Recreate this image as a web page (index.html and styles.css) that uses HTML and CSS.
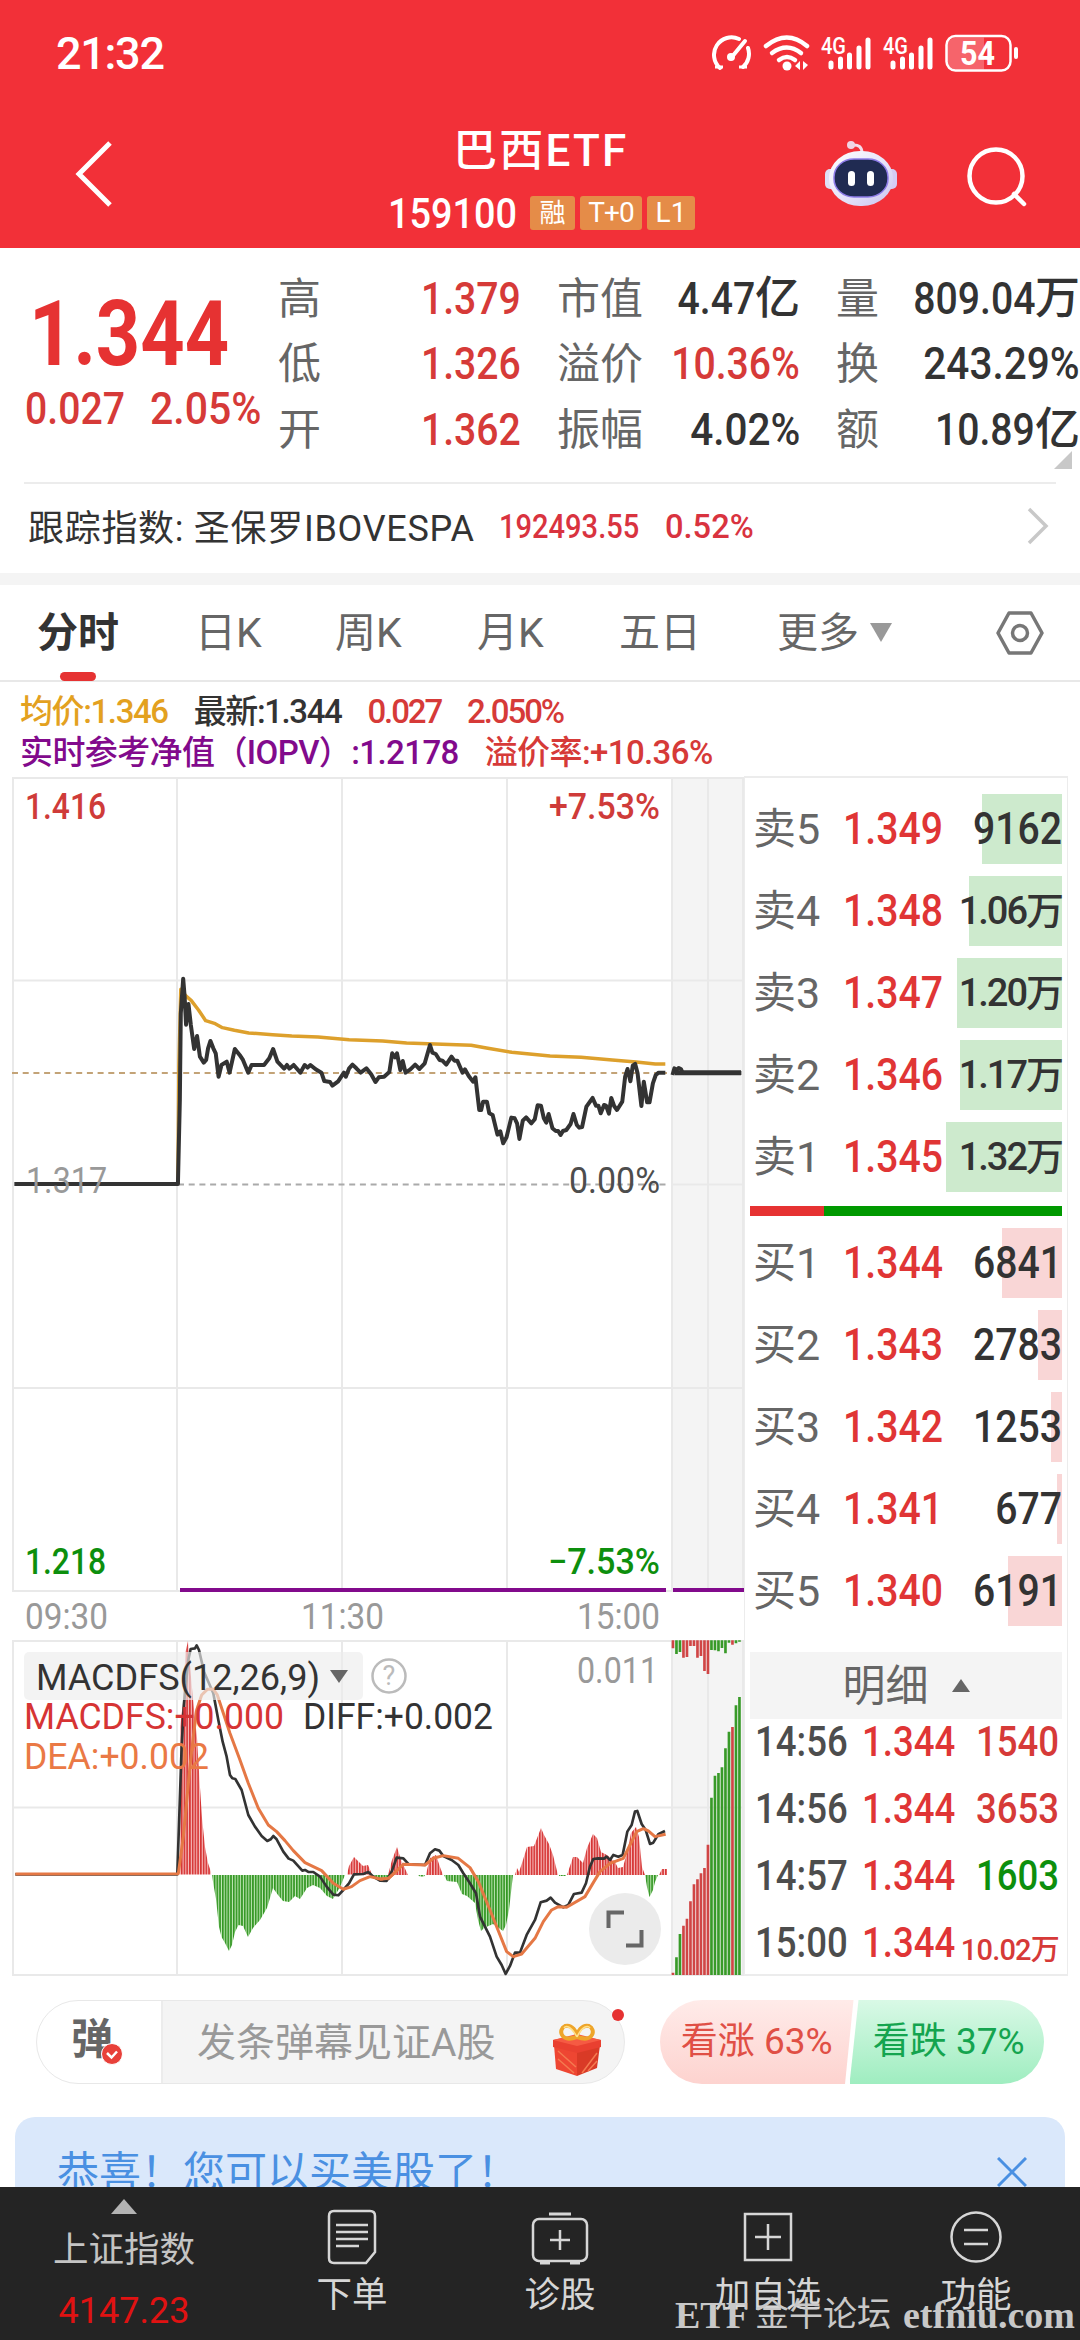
FILE: index.html
```html
<!DOCTYPE html>
<html lang="zh-CN">
<head>
    <meta charset="UTF-8">
    <meta name="viewport" content="width=device-width, initial-scale=1.0">
    <title>巴西ETF 159100</title>
    <link rel="stylesheet" href="styles.css">
</head>
<body>

<div class="header">
    <div class="status-bar">
        <div class="time">21:32</div>
        <svg class="status-icons" width="310" height="42" viewBox="0 0 310 42" fill="none" stroke="#fff">
            <!-- speed -->
            <path d="M8 34 A17.500 17.500 0 0 1 27 5 M36 14 A17.500 17.500 0 0 1 31 33" stroke-width="4" stroke-linecap="round"/>
            <path d="M3 33 h8 M27 33 h8" stroke-width="3"/>
            <path d="M19 24 L33 7" stroke-width="4" stroke-linecap="round"/>
            <circle cx="19" cy="23" r="4" fill="#fff" stroke="none"/>
            <!-- wifi -->
            <g stroke-width="4.500" stroke-linecap="round">
                <path d="M54 12 Q75 -5 95 12"/>
                <path d="M60 19 Q75 8 89 19"/>
                <path d="M67 26 Q75 20 83 26"/>
            </g>
            <circle cx="75" cy="32" r="4.500" fill="#fff" stroke="none"/>
            <path d="M88 27 v9 l-5 -4 z M91 27 v9 l5 -5 z" fill="#fff" stroke="none"/>
            <!-- signal -->
            <g stroke-width="5" stroke-linecap="round">
                <path d="M119 29 V33 M128.500 25 V33 M137.500 21 V33 M147 14 V33 M156 6 V33"/>
                <path d="M181 29 V33 M190.500 25 V33 M199.500 21 V33 M209 14 V33 M218 6 V33"/>
            </g>
            <text x="109" y="19.500" class="net" textLength="25" lengthAdjust="spacingAndGlyphs">4G</text>
            <text x="171" y="19.500" class="net" textLength="25" lengthAdjust="spacingAndGlyphs">4G</text>
            <!-- battery -->
            <path d="M244 3 h28 v32 h-28 a9 9 0 0 1 -9 -9 v-14 a9 9 0 0 1 9 -9z" fill="#f6646b" stroke="none" transform="translate(0 .5)"/>
            <rect x="234.500" y="2" width="64" height="34.500" rx="9" stroke-width="2.500"/>
            <path d="M304 15 v8" stroke-width="4" stroke-linecap="round"/>
            <text x="248" y="31" class="battery" textLength="35" lengthAdjust="spacingAndGlyphs">54</text>
        </svg>
    </div>
    <div class="nav">
        <svg class="back" width="40" height="68" viewBox="0 0 40 68" fill="none" stroke="#fff" stroke-width="5">
            <path d="M36 3 L5 34 L36 65"/>
        </svg>
        <div class="title">
            <div class="name">巴西ETF</div>
            <div class="code-row">
                <span class="code">159100</span>
                <span class="badge b1">融</span>
                <span class="badge b2">T+0</span>
                <span class="badge b3">L1</span>
            </div>
        </div>
        <svg class="robot" width="72" height="68" viewBox="0 0 72 68">
            <defs>
                <linearGradient id="shell" x1="0" y1="0" x2="1" y2="1">
                    <stop offset="0" stop-color="#fff"/>
                    <stop offset=".6" stop-color="#e3e0f8"/>
                    <stop offset="1" stop-color="#c9c3ef"/>
                </linearGradient>
            </defs>
            <path d="M27 5 Q37 4 37 13" fill="none" stroke="#f4dcea" stroke-width="3"/>
            <circle cx="26" cy="5" r="4" fill="#f0d4e4"/>
            <rect x="0" y="29" width="12" height="20" rx="5" fill="#dfe0f6"/>
            <rect x="60" y="29" width="12" height="20" rx="5" fill="#d5ccf4"/>
            <rect x="4" y="11" width="64" height="55" rx="31" ry="27" fill="url(#shell)"/>
            <rect x="9" y="19" width="54" height="38" rx="20" ry="18" fill="#202b52" stroke="#8d7be8" stroke-width="1.500"/>
            <rect x="23" y="31" width="7" height="15" rx="3.500" fill="#fff"/>
            <rect x="42" y="31" width="7" height="15" rx="3.500" fill="#fff"/>
        </svg>
        <svg class="search" width="62" height="62" viewBox="0 0 62 62" fill="none" stroke="#fff" stroke-width="4.500">
            <circle cx="30" cy="30" r="26.500"/>
            <path d="M48 48 L58 58" stroke-linecap="round"/>
        </svg>
    </div>
</div>

<div class="quote">
    <div class="quote-main">
        <div class="price">1.344</div>
        <div class="change"><span class="num">0.027</span><span class="num">2.05%</span></div>
    </div>
    <div class="stats">
        <div class="stat"><label>高</label><span class="num end red">1.379</span></div>
        <div class="stat"><label>市值</label><span class="num end">4.47</span>亿</div>
        <div class="stat"><label>量</label><span class="num end">809.04</span>万</div>
        <div class="stat"><label>低</label><span class="num end red">1.326</span></div>
        <div class="stat"><label>溢价</label><span class="num end red">10.36%</span></div>
        <div class="stat"><label>换</label><span class="num end wide">243.29%</span></div>
        <div class="stat"><label>开</label><span class="num end red">1.362</span></div>
        <div class="stat"><label>振幅</label><span class="num end wide">4.02%</span></div>
        <div class="stat"><label>额</label><span class="num end">10.89</span>亿</div>
    </div>
    <div class="corner"></div>
</div>

<div class="track">
    <div class="track-name">跟踪指数: 圣保罗IBOVESPA</div>
    <span class="num t1">192493.55</span>
    <span class="num t2">0.52%</span>
    <svg width="24" height="40" viewBox="0 0 24 40" fill="none" stroke="#c8c8c8" stroke-width="3.500">
        <path d="M3 3 L20 20 L3 37"/>
    </svg>
</div>

<div class="tabs">
    <div class="tab active">分时</div>
    <div class="tab">日K</div>
    <div class="tab">周K</div>
    <div class="tab">月K</div>
    <div class="tab">五日</div>
    <div class="tab more">更多</div>
    <svg class="tab-arrow" width="24" height="20" viewBox="0 0 24 20"><path d="M1 0 H23 L12 19z" fill="#999"/></svg>
    <svg class="setting" width="50" height="46" viewBox="0 0 50 46" fill="none" stroke="#777" stroke-width="3.500" stroke-linejoin="round">
        <path d="M14 3 H36 L47 23 L36 43 H14 L3 23z"/>
        <circle cx="25" cy="23" r="7.500"/>
    </svg>
</div>

<div class="info">
    <div class="info-row tight">
        <span class="avg">均价:1.346</span>
        <span class="last">最新:1.344</span>
        <span class="red diff">0.027</span>
        <span class="red diff">2.050%</span>
    </div>
    <div class="info-row">
        <span class="iopv">实时参考净值（IOPV）:1.2178</span>
        <span class="red">溢价率:+10.36%</span>
    </div>
</div>

<div class="main">
    <div class="charts">
        <svg width="744" height="1204" viewBox="0 772 744 1204">
            <defs>
                <pattern id="bar-red" width="2.740" height="10" patternUnits="userSpaceOnUse">
                    <rect width="2.740" height="10" fill="#f9c6c6"/>
                    <rect width="1.700" height="10" fill="#d63434"/>
                </pattern>
                <pattern id="bar-green" width="2.740" height="10" patternUnits="userSpaceOnUse">
                    <rect width="2.740" height="10" fill="#c2e8b8"/>
                    <rect width="1.700" height="10" fill="#329622"/>
                </pattern>
            </defs>

            <!-- after hours area -->
            <rect x="672" y="778" width="72" height="812" fill="#f4f4f4"/>
            <rect x="672" y="1641" width="72" height="333" fill="#f4f4f4"/>

            <!-- grid -->
            <g stroke="#e9e9e9" stroke-width="2" fill="none">
                <path d="M12 778 H744 M12 980.500 H744 M12 1388 H744 M12 1591 H744 M672 1184.500 H744"/>
                <path d="M13 777 V1591 M177 777 V1591 M342 777 V1591 M507 777 V1591 M672 777 V1591 M708 777 V1591 M743 777 V1591"/>
                <path d="M12 1641 H744 M12 1807.500 H744 M12 1975 H744"/>
                <path d="M13 1641 V1975 M177 1641 V1975 M342 1641 V1975 M507 1641 V1975 M672 1641 V1975 M708 1641 V1975 M743 1641 V1975"/>
            </g>
            <path d="M12 1073 H667" stroke="#c3a377" stroke-width="2" stroke-dasharray="6 4.700"/>
            <path d="M178 1184.500 H667" stroke="#aaa" stroke-width="2" stroke-dasharray="6 4.700"/>

            <!-- price lines -->
            <g transform="translate(0 900) scale(.4783 .3333)" fill="none" stroke-linejoin="round">
                <polyline vector-effect="non-scaling-stroke" stroke="#dda02c" stroke-width="3.500" points="372,852 374,500 378,268 388,287 400,302 415,330 430,362 450,371 465,383 490,391 520,399 570,404 610,408 665,411 730,419 800,423 850,429 910,432 985,436 1020,445 1070,457 1150,468 1215,472 1280,480 1330,486 1370,492 1391,492"/>
                <polyline vector-effect="non-scaling-stroke" stroke="#333" stroke-width="4" points="30,852 372,852 376,600 378,340 383,236 386,290 389,374 394,312 399,375 406,447 412,408 418,470 426,488 431,480 435,445 440,423 446,445 451,460 457,530 463,495 474,485 480,518 491,447 501,465 508,480 519,518 526,495 552,495 563,475 571,447 580,485 594,506 600,495 605,506 614,495 628,518 637,495 643,503 649,495 660,508 672,518 678,543 690,546 695,557 707,544 719,518 723,530 730,505 737,494 745,505 754,518 766,505 776,523 785,546 792,532 803,530 814,516 820,460 826,472 830,460 837,510 842,483 848,518 858,508 868,494 877,507 888,490 899,435 904,458 911,462 919,480 925,482 933,494 944,470 950,482 956,482 967,518 972,508 980,528 989,545 994,532 1002,630 1006,630 1010,605 1018,605 1023,640 1030,645 1040,704 1046,694 1052,730 1059,712 1069,653 1076,655 1081,670 1086,717 1093,662 1100,652 1111,670 1118,658 1124,616 1131,617 1137,655 1142,668 1147,642 1155,685 1162,693 1167,693 1172,705 1177,693 1184,690 1193,672 1199,642 1206,675 1211,683 1217,681 1226,620 1239,594 1246,617 1251,617 1256,640 1263,615 1267,617 1273,641 1278,594 1284,618 1290,630 1301,605 1307,530 1312,507 1318,544 1323,497 1328,492 1333,520 1341,618 1346,545 1353,607 1358,607 1365,550 1371,525 1377,518 1391,518"/>
                <polyline vector-effect="non-scaling-stroke" stroke="#333" stroke-width="4" points="1406,525 1410,505 1415,510 1419,504 1424,508 1427,519 1550,519"/>
            </g>
            <path d="M675 1072.800 H741" stroke="#333" stroke-width="5"/>
            <path d="M180 1590 H666 M673 1590 H744" stroke="#820a8c" stroke-width="4"/>

            <text x="25" y="819" class="axis b" fill="#cf3b39" textLength="81" lengthAdjust="spacingAndGlyphs">1.416</text>
            <text x="549" y="819" class="axis b" fill="#cf3b39" textLength="111" lengthAdjust="spacingAndGlyphs">+7.53%</text>
            <text x="26" y="1193" class="axis" fill="#999" textLength="81" lengthAdjust="spacingAndGlyphs">1.317</text>
            <text x="569" y="1193" class="axis" fill="#4d4d4d" textLength="91" lengthAdjust="spacingAndGlyphs">0.00%</text>
            <text x="25" y="1574" class="axis b" fill="#0d8f0d" textLength="81" lengthAdjust="spacingAndGlyphs">1.218</text>
            <text x="548" y="1574" class="axis b" fill="#0d8f0d" textLength="112" lengthAdjust="spacingAndGlyphs">−7.53%</text>
            <text x="25" y="1629" class="axis" fill="#999" textLength="83" lengthAdjust="spacingAndGlyphs">09:30</text>
            <text x="301" y="1629" class="axis" fill="#999" textLength="83" lengthAdjust="spacingAndGlyphs">11:30</text>
            <text x="577" y="1629" class="axis" fill="#999" textLength="83" lengthAdjust="spacingAndGlyphs">15:00</text>
            <text x="577" y="1683" class="axis" fill="#999" textLength="81" lengthAdjust="spacingAndGlyphs">0.011</text>

            <!-- macd, first half -->
            <path fill="url(#bar-red)" transform="translate(0 1560)" d="M180 314.500 V167 L183 143 L185.500 92 L188 81 L191 117 L194 149 L197 178 L199.500 220 L202 258 L205 287 L208 303 L211 312 V314.500z M347 314.500 L349 306 L354 297 L359 302 L363 306 L368 305 L372 314.500z"/>
            <path fill="url(#bar-green)" transform="translate(0 1560)" d="M212 315 L213.500 325 L216 339 L219 367 L221.500 377 L225 383 L229 391 L232 385 L235 372 L238.500 365 L243 366 L248 377 L253 368 L260 360 L267 348 L273 328 L278 335 L283 341 L289 342 L295 336 L300 339 L307 328 L313 325 L320 328 L327 336 L333 339 L340 327 L345 315z M373 315 L380 320 L388 319 L390 315z"/>
            <g transform="translate(0 1560) scale(.3333)" fill="none" stroke-linejoin="round">
                <polyline stroke="#333" stroke-width="8" points="46,943 532,943 545,560 552,430 565,300 572,267 585,265 590,256 597,270 612,335 640,400 655,480 668,545 680,590 690,645 697,655 706,657 725,690 745,765 765,800 785,828 802,843 812,838 820,828 830,838 850,875 866,896 880,902 907,932 915,930 925,936 940,936 960,950 980,980 1000,1004 1015,1006 1030,990 1047,970 1062,943 1090,942 1105,936 1120,950 1140,962 1160,963 1173,940 1190,893"/>
                <polyline stroke="#e57845" stroke-width="9" points="46,942 535,941 550,830 570,620 580,530 590,450 605,405 622,388 640,388 652,405 690,520 720,600 745,670 775,745 805,795 830,815 855,842 880,872 915,908 965,932 1000,970 1030,988 1055,980 1080,962 1110,950 1140,957 1165,956 1185,937"/>
            </g>
            <!-- macd, second half -->
            <path fill="url(#bar-red)" transform="translate(380 1600)" d="M8 275 L12 260 L17 247 L21 260 L28 275z M46 275 L47 270 L50 258 L56 255 L60 267 L63 275z M135 275 L137 268 L139 272 L142 263 L147 247 L154 246 L161 228 L164 235 L169 244 L173 255 L178 275z M187 275 L193 257 L197 257 L203 263 L207 248 L213 234 L217 238 L221 252 L227 255 L235 262 L238 268 L243 267 L247 253 L251 233 L256 227 L259 237 L262 267 L265 275z M279 275 L282 269 L287 269 V275z"/>
            <path fill="url(#bar-green)" transform="translate(380 1600)" d="M64 275 L67 281 L77 282 L82 294 L87 296 L95 303 L98 320 L101 331 L104 328 L113 324 L123 331 L126 325 L129 310 L133 275z M30 275 h8 l2 1.500 h4 l1 -1.500z M265 275 L267 287 L269.500 297 L273 290 L275 282 L278 275z M179 275 h7 v1 h-7z"/>
            <g transform="translate(380 1600) scale(.3333)" fill="none" stroke-linejoin="round">
                <polyline stroke="#333" stroke-width="8" points="10,843 25,836 35,815 50,773 70,775 85,792 135,795 150,760 165,748 178,752 190,768 215,780 235,795 250,820 270,850 288,880 300,950 330,1010 350,1070 365,1095 377,1122 390,1098 405,1058 420,1058 440,1005 465,960 482,907 500,902 512,893 525,908 550,922 565,915 582,882 605,878 618,850 630,800 640,777 655,775 672,776 680,770 690,780 700,765 715,770 728,765 742,695 755,675 765,635 772,633 785,672 797,690 810,732 820,728 835,703 855,693"/>
                <polyline stroke="#e57845" stroke-width="9" points="0,838 25,835 45,817 70,793 135,795 160,775 190,767 235,775 270,803 295,845 330,930 360,1005 380,1055 400,1070 425,1062 465,1015 490,965 515,930 535,920 560,922 615,890 640,848 660,815 690,790 730,775 750,735 770,695 790,686 805,693 825,710 857,703"/>
                <!-- after hours volume -->
                <g stroke-width="8">
                    <path stroke="#d04545" d="M879 1125 V1118 M910.500 1125 V977 M921 1125 V956 M931.500 1125 V904 M942 1125 V853 M952.500 1125 V838 M963 1125 V820 M973.500 1125 V804 M984 1125 V734 M1057.500 1125 V381 M879 121 V145 M910.500 121 V173 M921 121 V171 M931.500 121 V138 M942 121 V138 M952.500 121 V173 M963 121 V168 M973.500 121 V213 M984 121 V222 M1057.500 121 V134"/>
                    <path stroke="#389a28" d="M889.500 1125 V1072 M900 1125 V1002 M994.500 1125 V593 M1005 1125 V527 M1015.500 1125 V519 M1026 1125 V502 M1036.500 1125 V445 M1047 1125 V395 M1068 1125 V316 M1078.500 1125 V291 M889.500 121 V162 M900 121 V156 M994.500 121 V150 M1005 121 V151 M1015.500 121 V154 M1026 121 V144 M1036.500 121 V160 M1047 121 V128 M1068 121 V130 M1078.500 121 V125"/>
                </g>
            </g>

            <text x="24" y="1729" class="axis" fill="#d63434" textLength="260" lengthAdjust="spacingAndGlyphs">MACDFS:+0.000</text>
            <text x="303" y="1729" class="axis" fill="#333" textLength="190" lengthAdjust="spacingAndGlyphs">DIFF:+0.002</text>
            <text x="24" y="1769" class="axis" fill="#ea7945" textLength="185" lengthAdjust="spacingAndGlyphs">DEA:+0.002</text>

            <!-- indicator picker -->
            <rect x="24" y="1652" width="339" height="48" rx="5" fill="#ececec" opacity=".65"/>
            <text x="36" y="1690" class="axis" fill="#333" textLength="284" lengthAdjust="spacingAndGlyphs">MACDFS(12,26,9)</text>
            <path d="M330 1670 H348 L339 1683z" fill="#666"/>
            <circle cx="389" cy="1676" r="16.500" fill="none" stroke="#bbb" stroke-width="2.500"/>
            <text x="389" y="1685" text-anchor="middle" class="help">?</text>

            <!-- full screen -->
            <circle cx="625" cy="1929" r="36" fill="#ebebeb"/>
            <path d="M608.500 1928 V1912.500 H624 M626 1945.500 H641.500 V1930" fill="none" stroke="#666" stroke-width="4"/>
        </svg>
    </div>

    <div class="book">
        <div class="level sell"><i style="width: 80px"></i><b>卖5</b><span class="num p">1.349</span><span class="num end v">9162</span></div>
        <div class="level sell"><i style="width: 93px"></i><b>卖4</b><span class="num p">1.348</span><span class="v small">1.06万</span></div>
        <div class="level sell"><i style="width: 105px"></i><b>卖3</b><span class="num p">1.347</span><span class="v small">1.20万</span></div>
        <div class="level sell"><i style="width: 102px"></i><b>卖2</b><span class="num p">1.346</span><span class="v small">1.17万</span></div>
        <div class="level sell"><i style="width: 116px"></i><b>卖1</b><span class="num p">1.345</span><span class="v small">1.32万</span></div>
        <div class="ratio"><div></div></div>
        <div class="level buy"><i style="width: 60px"></i><b>买1</b><span class="num p">1.344</span><span class="num end v">6841</span></div>
        <div class="level buy"><i style="width: 24px"></i><b>买2</b><span class="num p">1.343</span><span class="num end v">2783</span></div>
        <div class="level buy"><i style="width: 11px"></i><b>买3</b><span class="num p">1.342</span><span class="num end v">1253</span></div>
        <div class="level buy"><i style="width: 5px"></i><b>买4</b><span class="num p">1.341</span><span class="num end v">677</span></div>
        <div class="level buy"><i style="width: 54px"></i><b>买5</b><span class="num p">1.340</span><span class="num end v">6191</span></div>
        <div class="detail-title">明细<svg width="18" height="13" viewBox="0 0 18 13"><path d="M0 13 L9 0 L18 13z" fill="#666"/></svg></div>
        <div class="tick"><span class="num t">14:56</span><span class="num p">1.344</span><span class="num end v red">1540</span></div>
        <div class="tick"><span class="num t">14:56</span><span class="num p">1.344</span><span class="num end v red">3653</span></div>
        <div class="tick"><span class="num t">14:57</span><span class="num p">1.344</span><span class="num end v green">1603</span></div>
        <div class="tick"><span class="num t">15:00</span><span class="num p">1.344</span><span class="v small red">10.02万</span></div>
    </div>
</div>

<div class="danmu">
    <div class="danmu-box">
        <div class="danmu-switch">弹
            <svg width="22" height="22" viewBox="0 0 22 22"><circle cx="11" cy="11" r="10.500" fill="#e8403a" stroke="#fff"/><path d="M6 10 L10.500 14.500 L16 8.500" fill="none" stroke="#fff" stroke-width="2.500"/></svg>
        </div>
        <div class="danmu-input">发条弹幕见证A股</div>
        <svg class="gift" width="50" height="54" viewBox="0 0 50 54">
            <path d="M2 22 L25 28 V53 L4 46z" fill="#ee4632"/>
            <path d="M48 22 L25 28 V53 L45 45z" fill="#d93a26"/>
            <path d="M1 17 L25 12 L49 17 V24 L25 30 L1 24z" fill="#e94030"/>
            <path d="M1 17 L25 11 L49 17 L25 23z" fill="#f55a43"/>
            <path d="M6 36 L22 50 M6 28 L24 44 M45 30 L30 50 M45 38 L36 48" stroke="#f47a50" stroke-width="1.500"/>
            <path d="M25 14 C8 20 6 6 13 3 C20 1 25 9 25 14 C25 9 30 1 37 3 C44 6 42 20 25 14z" fill="none" stroke="#eea52a" stroke-width="4"/>
            <path d="M25 14 C19 3 14 2 12 5 M25 14 C30 3 36 2 38 5" fill="none" stroke="#ffe08a" stroke-width="1.500"/>
        </svg>
        <div class="dot"></div>
    </div>
    <div class="vote">
        <div class="vote-up">看涨 63%</div>
        <div class="vote-down">看跌 37%</div>
    </div>
</div>

<div class="banner">
    <div>恭喜！您可以买美股了！</div>
    <svg width="30" height="30" viewBox="0 0 30 30" stroke="#4a90e2" stroke-width="3"><path d="M1 1 L29 29 M29 1 L1 29"/></svg>
</div>

<div class="footer">
    <div class="index">
        <svg width="26" height="15" viewBox="0 0 26 15"><path d="M0 15 L13 0 L26 15z" fill="#b3b3b3"/></svg>
        <div class="index-name">上证指数</div>
        <div class="index-value">4147.23</div>
    </div>
    <div class="menu">
        <svg width="60" height="56" viewBox="0 0 60 56" fill="none" stroke="#d6d6d6" stroke-width="2.500">
            <path d="M12 2 H48 Q53 2 53 7 V43 L44 54 H12 Q7 54 7 49 V7 Q7 2 12 2z"/>
            <path d="M14 16 H46 M14 23 H46 M14 30 H46 M14 37 H37"/>
        </svg>
        下单
    </div>
    <div class="menu">
        <svg width="60" height="56" viewBox="0 0 60 56" fill="none" stroke="#d6d6d6" stroke-width="2.500">
            <path d="M19 5 H41" stroke-width="3"/>
            <rect x="3" y="10" width="54" height="42" rx="6"/>
            <path d="M20 31 H40 M30 21 V41"/>
            <path d="M10 54 H20 M40 54 H50" stroke-width="3"/>
        </svg>
        诊股
    </div>
    <div class="menu">
        <svg width="60" height="56" viewBox="0 0 60 56" fill="none" stroke="#d6d6d6" stroke-width="2.500">
            <rect x="7" y="5" width="46" height="46"/>
            <path d="M17 28 H43 M30 15 V41"/>
        </svg>
        加自选
    </div>
    <div class="menu">
        <svg width="60" height="56" viewBox="0 0 60 56" fill="none" stroke="#d6d6d6" stroke-width="2.500">
            <circle cx="30" cy="28" r="24.500"/>
            <path d="M18 21 H42 M18 35 H42"/>
        </svg>
        功能
    </div>
    <div class="site"><span class="site-etf">ETF</span><span class="site-cn">金牛论坛</span><span class="site-url">etfniu.com</span></div>
</div>

</body>
</html>
```
FILE: styles.css
```css
* {
    box-sizing: border-box;
}
body {
    margin: 0;
    width: 1080px;
    height: 2340px;
    overflow: hidden;
    background-color: #fff;
    color: #333;
    font-family: Roboto, "Noto Sans CJK SC", sans-serif;
}
svg {
    display: block;
    flex: none;
}
.red {
    color: #d63a38;
}
.green {
    color: #0d8f0d;
}
.num {
    display: inline-block;
    font-weight: 500;
    white-space: nowrap;
    transform: scaleX(0.87);
    transform-origin: left center;
}
.num.end {
    transform-origin: right center;
}
.num.wide {
    transform: scaleX(0.9);
}

/* header */
.header {
    height: 248px;
    background-color: #f23038;
    color: #fff;
}
.status-bar {
    display: flex;
    justify-content: space-between;
    height: 108px;
    padding: 34px 58px 0 56px;
}
.time {
    font-size: 45px;
    line-height: 40px;
    font-weight: 500;
    letter-spacing: -1.3px;
}
.net {
    font-size: 23px;
    font-weight: 500;
    fill: #fff;
    stroke: none;
}
.battery {
    font-size: 33px;
    font-weight: 700;
    fill: #fff;
    stroke: none;
}
.nav {
    display: flex;
    height: 140px;
}
.back {
    margin: 32px 0 0 74px;
}
.title {
    width: 320px;
    margin-left: 268px;
    padding-top: 15px;
}
.name {
    padding-left: 71px;
    font-size: 44px;
    line-height: 56px;
    font-weight: 500;
    white-space: nowrap;
    letter-spacing: 2.2px;
}
.code-row {
    display: flex;
    align-items: center;
    height: 40px;
    margin-top: 14px;
    padding-left: 6px;
}
.code {
    width: 142px;
    font-size: 43px;
    line-height: 40px;
    font-weight: 500;
    transform: scaleX(0.88);
    transform-origin: left center;
}
.badge {
    height: 34px;
    margin-right: 5px;
    border-radius: 3px;
    background-color: #e58c48;
    font-size: 28px;
    line-height: 34px;
    text-align: center;
}
.b1 {
    width: 45px;
    font-size: 26px;
}
.b2 {
    width: 62px;
    letter-spacing: -1px;
}
.b3 {
    width: 48px;
}
.robot {
    margin: 32px 0 0 123px;
}
.search {
    margin: 38px 0 0 69px;
}

/* quote */
.quote {
    display: flex;
    position: relative;
    height: 236px;
}
.quote::after {
    content: "";
    position: absolute;
    left: 24px;
    right: 24px;
    bottom: 0;
    height: 2px;
    background-color: #ececec;
}
.quote-main {
    width: 280px;
    padding-top: 42px;
    color: #e63232;
}
.price {
    padding-left: 29px;
    font-size: 90px;
    line-height: 90px;
    font-weight: 700;
    transform: scaleX(0.86);
    transform-origin: 29px center;
}
.change {
    display: flex;
    padding: 9px 0 0 25px;
    font-size: 45px;
    line-height: 40px;
    color: #d63a38;
}
.change .num + .num {
    margin-left: 10px;
    transform: scaleX(0.91);
}
.stats {
    display: grid;
    grid-template-columns: 243px 243px 244px;
    grid-auto-rows: 65.5px;
    column-gap: 36px;
    padding-top: 18px;
}
.stat {
    display: flex;
    align-items: center;
    font-size: 45px;
    line-height: 60px;
    font-weight: 500;
    white-space: nowrap;
}
.stat label {
    flex: 1;
    font-size: 43px;
    font-weight: 400;
    color: #666;
}
.corner {
    position: absolute;
    left: 1054px;
    top: 203px;
    border-left: 18px solid transparent;
    border-bottom: 18px solid #c8c8c8;
}

/* tracking index */
.track {
    display: flex;
    align-items: center;
    height: 101px;
    padding: 0 30px 5px 28px;
    border-bottom: 12px solid #f4f4f4;
    font-size: 36px;
}
.track-name {
    width: 471px;
    margin-top: -3px;
    letter-spacing: 0.7px;
    white-space: nowrap;
}
.track .num {
    font-size: 34px;
    color: #d9333f;
}
.track .t1 {
    width: 166px;
    transform: scaleX(0.855);
}
.track .t2 {
    flex: 1;
    transform: scaleX(0.96);
}

/* tabs */
.tabs {
    display: flex;
    align-items: center;
    height: 97px;
    border-bottom: 2px solid #e8e8e8;
    font-size: 41px;
    color: #666;
}
.tab {
    position: relative;
    width: 142px;
    line-height: 60px;
    white-space: nowrap;
}
.tab:nth-child(2) {
    width: 140px;
}
.tab:nth-child(5) {
    width: 158px;
}
.tab.more {
    width: 92px;
}
.tab.active {
    width: 195px;
    padding-left: 37px;
    font-weight: 700;
    color: #333;
}
.tab.active::after {
    content: "";
    position: absolute;
    left: 60px;
    top: 69px;
    width: 36px;
    height: 9px;
    border-radius: 5px;
    background-color: #e63232;
}
.setting {
    margin-left: 102px;
}

/* legend above chart */
.info {
    height: 90px;
    padding: 9px 0 0 20px;
    font-size: 33px;
    line-height: 41px;
    font-weight: 500;
}
.info-row {
    display: flex;
    letter-spacing: -0.6px;
    white-space: nowrap;
}
.info-row span {
    margin-right: 26px;
}
.info-row.tight {
    letter-spacing: -1.4px;
}
.info-row .diff {
    letter-spacing: -2.1px;
}
.avg {
    color: #e3a11f;
}
.iopv {
    color: #820a8c;
}

/* charts and order book */
.main {
    display: flex;
    height: 1204px;
}
.charts {
    width: 744px;
}
.axis {
    font-size: 36px;
}
.axis.b {
    font-weight: 500;
}
.help {
    font-size: 27px;
    fill: #bbb;
}
.book {
    width: 324px;
    margin-top: 4px;
    padding: 16px 5px 0;
    border: 1px solid #ececec;
    border-width: 2px 1px;
}
.level {
    display: flex;
    align-items: center;
    position: relative;
    height: 70px;
    margin-bottom: 12px;
    padding-left: 3px;
    font-size: 45px;
    line-height: 60px;
}
.level i {
    position: absolute;
    right: 0;
    top: 0;
    height: 70px;
    background-color: #cdeacd;
}
.level.buy i {
    background-color: #f9d6d6;
}
.level b {
    width: 90px;
    font-size: 43px;
    font-weight: 400;
    color: #666;
}
.level span, .level b {
    position: relative;
}
.level .p, .tick .p {
    color: #e03535;
}
.level .v, .tick .v {
    flex: 1;
    text-align: right;
}
.level .p {
    width: 98px;
}
.level .small {
    flex: none;
    margin: 0 0 0 auto;
    font-size: 38px;
    font-weight: 500;
    letter-spacing: -2px;
}
.ratio {
    height: 10px;
    margin: 14px 0 12px;
    background-color: #009900;
}
.ratio div {
    width: 74px;
    height: 10px;
    background-color: #e63232;
}
.detail-title {
    display: flex;
    align-items: center;
    justify-content: center;
    gap: 23px;
    height: 67px;
    margin-top: 26px;
    background-color: #f4f4f4;
    font-size: 43px;
    line-height: 60px;
    color: #666;
}
.tick {
    display: flex;
    align-items: center;
    height: 67px;
    padding: 0 3px 0 5px;
    font-size: 42px;
    white-space: nowrap;
}
.detail-title + .tick {
    height: 45px;
    margin-bottom: 11px;
}
.tick .t {
    width: 107px;
    color: #4d4d4d;
}
.tick .p {
    width: 90px;
}
.tick .small {
    flex: none;
    margin-left: auto;
    padding-top: 8px;
    font-size: 29px;
    font-weight: 500;
    letter-spacing: -0.8px;
}

/* danmu */
.danmu {
    display: flex;
    justify-content: space-between;
    height: 141px;
    padding: 24px 36px 0;
}
.danmu-box {
    display: flex;
    position: relative;
    width: 589px;
    height: 84px;
    border: 1px solid #e8e8e8;
    border-radius: 42px;
    background: linear-gradient(to right, #fff 124px, #ececec 124px, #ececec 126px, #f4f4f4 126px);
}
.danmu-switch {
    position: relative;
    width: 125px;
    padding-left: 34px;
    font-size: 42px;
    line-height: 77px;
    font-weight: 700;
    color: #666;
}
.danmu-switch svg {
    position: absolute;
    left: 64px;
    top: 42px;
}
.danmu-input {
    width: 390px;
    padding-left: 35px;
    font-size: 39px;
    line-height: 84px;
    color: #999;
    white-space: nowrap;
}
.gift {
    margin-top: 22px;
}
.dot {
    position: absolute;
    left: 575px;
    top: 8px;
    width: 12px;
    height: 12px;
    border-radius: 6px;
    background-color: #e63232;
}
.vote {
    display: flex;
    width: 384px;
    height: 84px;
    border-radius: 42px;
    overflow: hidden;
    font-size: 37px;
    line-height: 83px;
    text-align: center;
    white-space: nowrap;
}
.vote-up {
    width: 194px;
    background: linear-gradient(#ffebe9, #fdd3cf);
    clip-path: polygon(0 0, 100% 0, 185px 100%, 0 100%);
    color: #e04f45;
}
.vote-down {
    width: 195px;
    margin-left: -4px;
    padding-left: 4px;
    background: linear-gradient(#d9f9e6, #9fedc0);
    clip-path: polygon(9px 0, 100% 0, 100% 100%, 0 100%);
    color: #14a44f;
}

/* banner */
.banner {
    display: flex;
    justify-content: space-between;
    height: 70px;
    margin: 0 15px;
    padding: 40px 38px 0 42px;
    border-radius: 20px 20px 0 0;
    background-color: #dae8fb;
    overflow: hidden;
    font-size: 42px;
    line-height: 31px;
    color: #4a90e2;
}

/* footer */
.footer {
    display: flex;
    position: relative;
    height: 153px;
    background-color: #242424;
    color: #d6d6d6;
}
.index {
    display: flex;
    flex-direction: column;
    align-items: center;
    width: 248px;
    padding-top: 12px;
}
.index-name {
    margin-top: 16px;
    font-size: 35.5px;
    line-height: 40px;
    color: #c4c4c4;
}
.index-value {
    margin-top: 21px;
    font-size: 36px;
    line-height: 40px;
    color: #e01212;
}
.menu {
    display: flex;
    flex-direction: column;
    align-items: center;
    width: 208px;
    padding-top: 22px;
    font-size: 35.5px;
    line-height: 60px;
}
.site {
    display: flex;
    position: absolute;
    left: 675px;
    top: 108px;
    font-family: "Liberation Serif", "Noto Sans CJK SC", serif;
    font-size: 38px;
    line-height: 40px;
    white-space: nowrap;
    color: #c8c8c8;
}
.site-etf, .site-url {
    font-weight: 700;
}
.site-etf {
    width: 80px;
}
.site-cn {
    width: 148px;
    font-size: 34px;
}
```
